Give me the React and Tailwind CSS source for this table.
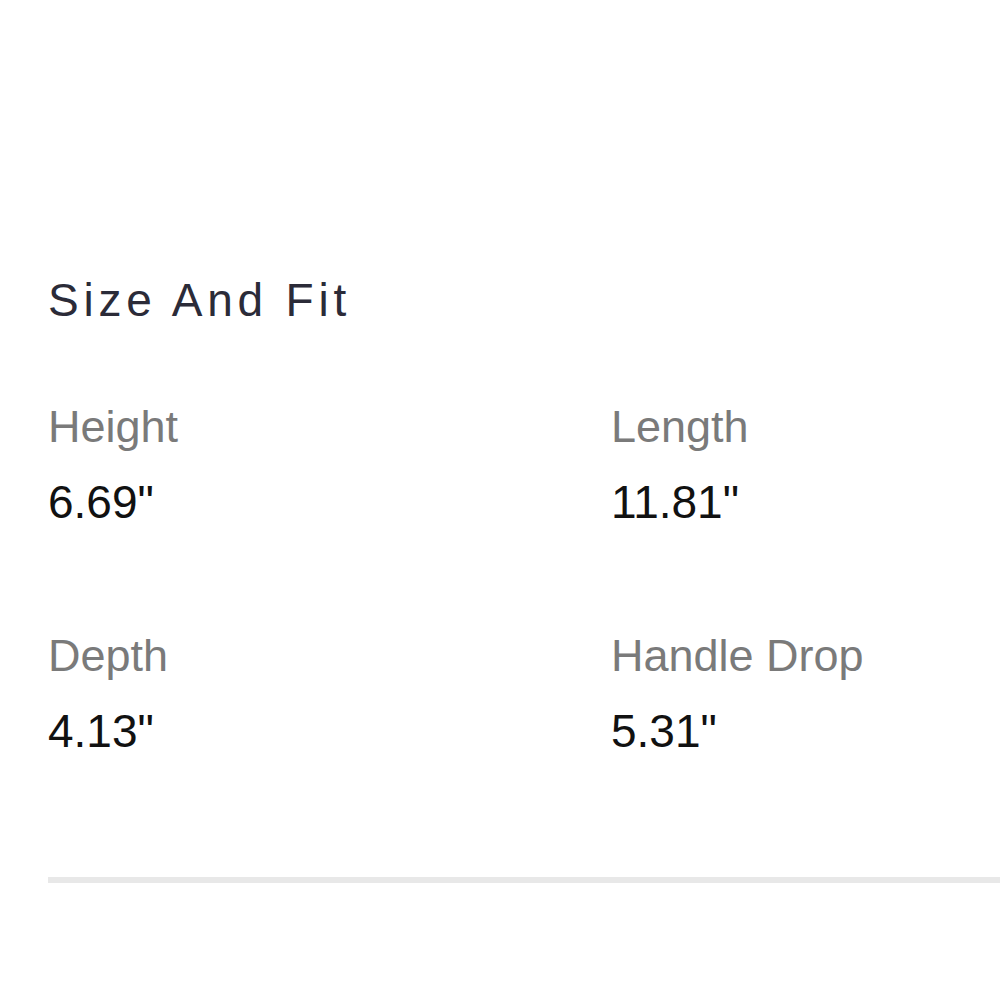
const specs = [
  { label: "Height", value: '6.69"' },
  { label: "Length", value: '11.81"' },
  { label: "Depth", value: '4.13"' },
  { label: "Handle Drop", value: '5.31"' },
];

export default function App() {
  return (
    <div className="min-h-[1000px] w-[1000px] overflow-hidden bg-white font-['Liberation_Sans',Arial,sans-serif]">
      <div className="pl-12 pt-[272px]">
        <h2 className="text-[46px] leading-[56px] font-normal tracking-[4.8px] text-[#2b2b38]">Size And Fit</h2>
        <div className="mt-[71px] grid grid-cols-[563px_1fr] gap-y-[98px]">
          {specs.map((s) => (
            <div key={s.label} className="flex flex-col gap-[19px]">
              <span className="text-[45px] leading-[56px] text-[#7a7a7a]">{s.label}</span>
              <span className="text-[46px] leading-[56px] text-[#111111]">{s.value}</span>
            </div>
          ))}
        </div>
        <div className="mt-[118px] h-[6px] w-[1000px] bg-[#e8e8e8]" />
      </div>
    </div>
  );
}
